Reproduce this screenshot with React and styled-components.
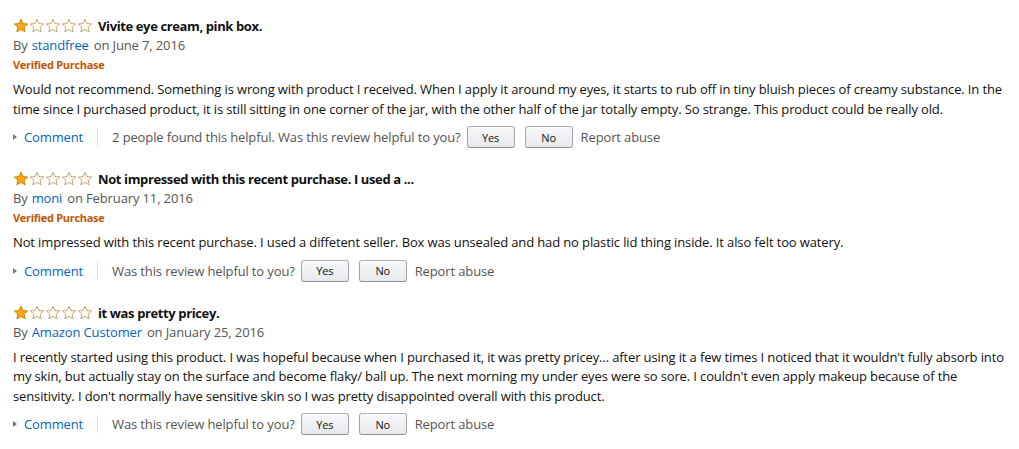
import React from "react";
import styled, { createGlobalStyle } from "styled-components";

const Global = createGlobalStyle`
  html, body { margin: 0; padding: 0; background: #fff; }
  body {
    font-family: "Open Sans", "Noto Sans", sans-serif;
    font-size: 13px;
    letter-spacing: -0.13px;
    color: #111;
  }
`;

const Page = styled.div`
  padding: 17px 13px 0 13px;
  display: flex;
  flex-direction: column;
  gap: 20px;
`;

const Review = styled.div`
  display: flex;
  flex-direction: column;
`;

const TitleRow = styled.div`
  display: flex;
  align-items: center;
  height: 18px;
  gap: 5px;
`;

const Stars = styled.div`
  display: flex;
`;

const Title = styled.span`
  font-weight: 700;
  font-size: 13px;
  letter-spacing: -0.38px;
  color: #111;
`;

const Byline = styled.div`
  height: 20px;
  line-height: 20px;
  color: #555;
`;

const Link = styled.a`
  color: #0066c0;
  text-decoration: none;
  margin: 0 5px 0 4px;
`;

const Verified = styled.div`
  height: 20px;
  line-height: 20px;
  color: #c45500;
  font-size: 11px;
  font-weight: 700;
  letter-spacing: -0.3px;
`;

const Body = styled.p`
  margin: ${(p) => (p.$verified ? "5px" : "6px")} 0 0 0;
  line-height: 19.5px;
  color: #111;
`;

const Actions = styled.div`
  display: flex;
  align-items: center;
  height: 26px;
  margin-top: 5px;
  color: #555;
`;

const Comment = styled.a`
  display: flex;
  align-items: center;
  color: #0066c0;
  text-decoration: none;
  gap: 7px;
  &::before {
    content: "";
    border-left: 4px solid #777;
    border-top: 3.5px solid transparent;
    border-bottom: 3.5px solid transparent;
  }
`;

const Sep = styled.span`
  width: 1px;
  height: 18px;
  background: #ddd;
  margin: 0 14px 0 14px;
`;

const Helpful = styled.span`
  margin-right: 6px;
`;

const Button = styled.button`
  font-family: "Open Sans", "Noto Sans", sans-serif;
  font-size: 11px;
  letter-spacing: -0.2px;
  color: #111;
  width: 48px;
  height: 22px;
  border: 1px solid #adb1b8;
  border-color: #adb1b8 #a2a6ac #8d9096;
  border-radius: 3px;
  background: linear-gradient(to bottom, #f7f8fa, #e7e9ec);
  box-shadow: inset 0 1px 0 rgba(255, 255, 255, 0.6);
  padding: 0;
  margin-right: ${(p) => p.$gap || 0}px;
`;

const Report = styled.span`
  color: #555;
`;

function Star({ filled }) {
  return (
    <svg width="16" height="16" viewBox="0 0 16 16">
      <path
        d="M8 1.2l1.95 4.35 4.75.45-3.6 3.15 1.05 4.65L8 11.4l-4.15 2.4 1.05-4.65L1.3 6l4.75-.45z"
        fill={filled ? "#ffa41c" : "#fff"}
        stroke={filled ? "#d08a00" : "#c9a46a"}
        strokeWidth="1"
        strokeLinejoin="round"
      />
    </svg>
  );
}

const reviews = [
  {
    title: "Vivite eye cream, pink box.",
    author: "standfree",
    date: "June 7, 2016",
    verified: true,
    body:
      "Would not recommend. Something is wrong with product I received. When I apply it around my eyes, it starts to rub off in tiny bluish pieces of creamy substance. In the time since I purchased product, it is still sitting in one corner of the jar, with the other half of the jar totally empty. So strange. This product could be really old.",
    helpful: "2 people found this helpful. Was this review helpful to you?",
  },
  {
    title: "Not impressed with this recent purchase. I used a ...",
    author: "moni",
    date: "February 11, 2016",
    verified: true,
    body:
      "Not impressed with this recent purchase. I used a diffetent seller. Box was unsealed and had no plastic lid thing inside. It also felt too watery.",
    helpful: "Was this review helpful to you?",
  },
  {
    title: "it was pretty pricey.",
    author: "Amazon Customer",
    date: "January 25, 2016",
    verified: false,
    body:
      "I recently started using this product. I was hopeful because when I purchased it, it was pretty pricey... after using it a few times I noticed that it wouldn't fully absorb into my skin, but actually stay on the surface and become flaky/ ball up. The next morning my under eyes were so sore. I couldn't even apply makeup because of the sensitivity. I don't normally have sensitive skin so I was pretty disappointed overall with this product.",
    helpful: "Was this review helpful to you?",
  },
];

export default function App() {
  return (
    <>
      <Global />
      <Page>
        {reviews.map((r, i) => (
          <Review key={i}>
            <TitleRow>
              <Stars>
                {[0, 1, 2, 3, 4].map((s) => (
                  <Star key={s} filled={s === 0} />
                ))}
              </Stars>
              <Title>{r.title}</Title>
            </TitleRow>
            <Byline>
              By<Link href="#">{r.author}</Link>on {r.date}
            </Byline>
            {r.verified && <Verified>Verified Purchase</Verified>}
            <Body $verified={r.verified}>{r.body}</Body>
            <Actions>
              <Comment href="#">Comment</Comment>
              <Sep />
              <Helpful>{r.helpful}</Helpful>
              <Button $gap={10}>Yes</Button>
              <Button $gap={8}>No</Button>
              <Report>Report abuse</Report>
            </Actions>
          </Review>
        ))}
      </Page>
    </>
  );
}
